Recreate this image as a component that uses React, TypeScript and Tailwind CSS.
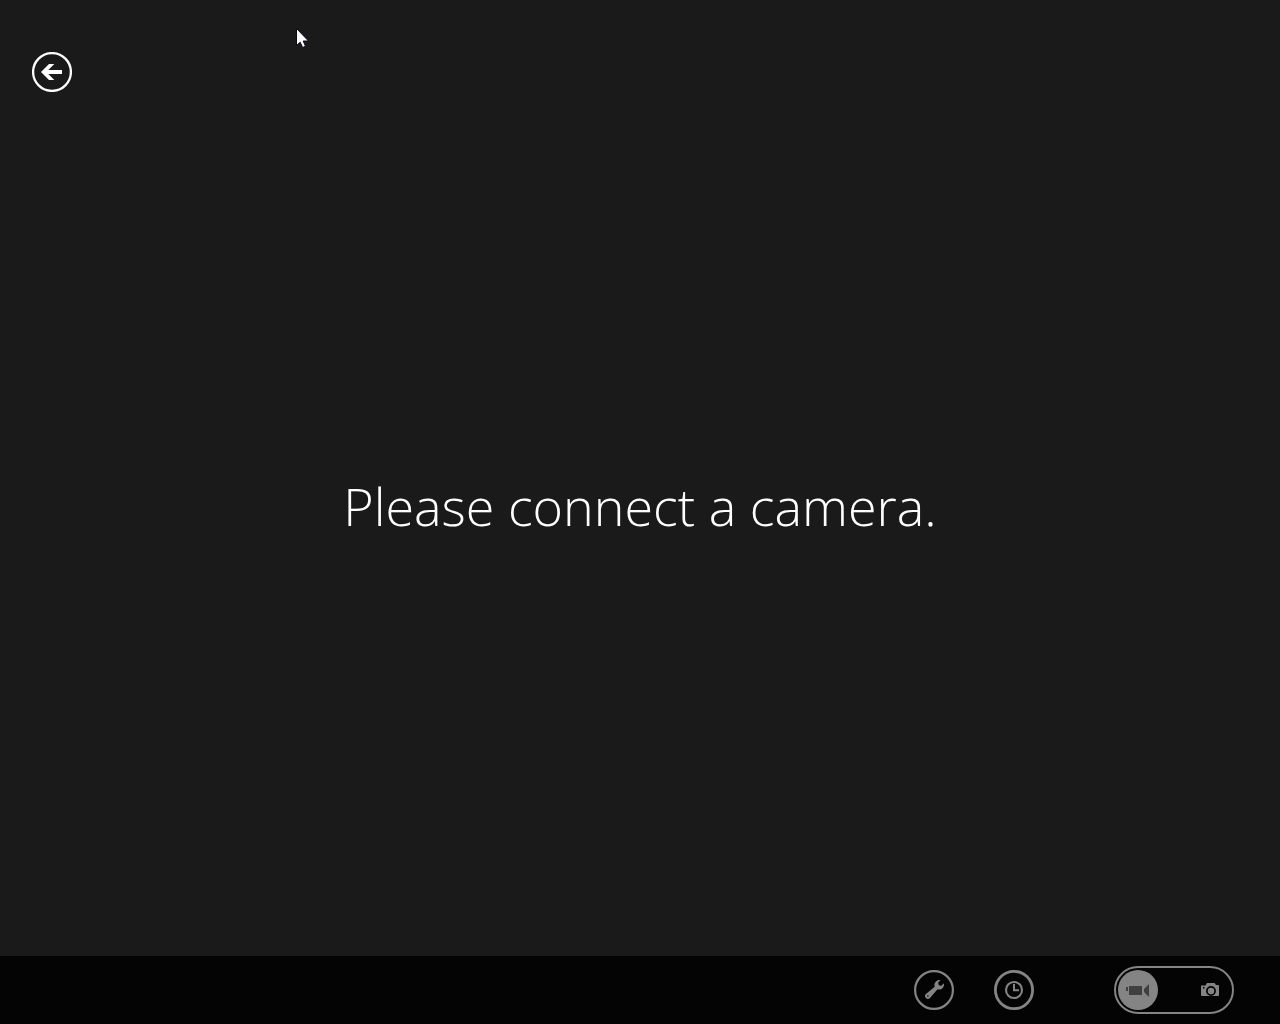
import { useState } from "react";

function BackArrow() {
  return (
    <svg viewBox="0 0 40 40" className="h-10 w-10" fill="none" aria-hidden="true">
      <circle cx="20" cy="20" r="18.9" stroke="white" strokeWidth="2.3" />
      <path d="M9 20 L17 12 H22.3 L16.3 18 H30 V22 H16.3 L22.3 28 H17 Z" fill="white" />
    </svg>
  );
}

function Wrench() {
  return (
    <svg viewBox="0 0 40 40" className="h-10 w-10" fill="none" aria-hidden="true">
      <circle cx="20" cy="20" r="18.9" stroke="currentColor" strokeWidth="2.2" />
      <path
        d="M26.6 10 C23.4 9.6 20.5 11.8 20.4 14.9 C20.4 15.6 20.5 16.2 20.7 16.7 L11.9 23.9 A2.8 2.8 0 1 0 16 28 L23.3 19.4 C27 20.4 30.6 17.6 30 13.2 L27.3 15.8 L24.8 15.2 L24.2 12.6 Z M13.9 25.2 A0.8 0.8 0 1 1 13.9 26.8 A0.8 0.8 0 1 1 13.9 25.2 Z"
        fill="currentColor"
        fillRule="evenodd"
      />
    </svg>
  );
}

function Timer() {
  return (
    <svg viewBox="0 0 40 40" className="h-10 w-10" fill="none" stroke="currentColor" aria-hidden="true">
      <circle cx="20" cy="20" r="18.6" strokeWidth="2.8" />
      <circle cx="20" cy="20" r="8" strokeWidth="2.1" />
      <path d="M20 14 V20.2 H25" strokeWidth="2" />
    </svg>
  );
}

function VideoCamera() {
  return (
    <svg viewBox="0 0 40 40" className="h-10 w-10" fill="currentColor" aria-hidden="true">
      <path d="M8 17 H10 V21 H8 Z M11 16 H24 V25 H11 Z M26 19 L29 16 L31 14 V27 L29 25 L26 22 Z" />
    </svg>
  );
}

function PhotoCamera() {
  return (
    <svg viewBox="0 0 40 40" className="h-10 w-10" aria-hidden="true">
      <path
        d="M11 15.5 H15.4 L17 13 H24.5 L26 15 H28 Q29 15 29 16 V25 Q29 26 28 26 H12 Q11 26 11 25 Z"
        fill="currentColor"
      />
      <circle cx="21" cy="21" r="4.1" fill="currentColor" stroke="#040404" strokeWidth="1.7" />
      <path d="M13 17 H14.5 V18.5 H13 Z" fill="#040404" />
    </svg>
  );
}

const modeClass = "flex h-10 w-10 rounded-full";

export default function App() {
  const [mode, setMode] = useState("video");

  return (
    <div className="relative flex min-h-screen flex-col bg-[#1a1a1a] font-['Open_Sans','Noto_Sans',sans-serif] text-white">
      <header className="flex px-8 pt-[52px]">
        <button type="button" aria-label="Back" className="rounded-full">
          <BackArrow />
        </button>
      </header>

      <main className="flex grow items-center justify-center px-8 pb-9">
        <h1 className="text-center text-[52px] leading-[76px] font-light">Please connect a camera.</h1>
      </main>

      {/* App bar */}
      <footer className="flex h-[68px] items-center justify-end bg-[#040404] pr-[46px] text-[#848484]">
        <button type="button" aria-label="Camera options" className="mr-10 rounded-full">
          <Wrench />
        </button>
        <button type="button" aria-label="Timer" className="mr-20 rounded-full">
          <Timer />
        </button>
        <div
          role="radiogroup"
          aria-label="Capture mode"
          className="flex h-12 w-[120px] items-center justify-between rounded-full border-2 border-[#848484] px-0.5"
        >
          <label className={mode === "video" ? `${modeClass} bg-[#848484] text-[#404040]` : modeClass}>
            <input
              type="radio"
              name="mode"
              aria-label="Video"
              className="sr-only"
              checked={mode === "video"}
              onChange={() => setMode("video")}
            />
            <VideoCamera />
          </label>
          <label className={mode === "photo" ? `${modeClass} bg-[#848484] text-[#404040]` : modeClass}>
            <input
              type="radio"
              name="mode"
              aria-label="Photo"
              className="sr-only"
              checked={mode === "photo"}
              onChange={() => setMode("photo")}
            />
            <PhotoCamera />
          </label>
        </div>
      </footer>

      {/* Mouse pointer */}
      <svg
        viewBox="0 0 14 20"
        className="pointer-events-none absolute top-7 left-[295px] h-5 w-3.5"
        aria-hidden="true"
      >
        <path
          d="M1.5 0.5 V17.5 L5.2 14.2 L7.6 19.5 L10.5 18.2 L8.2 13 H13.5 Z"
          fill="white"
          stroke="#080820"
          strokeWidth="1"
        />
      </svg>
    </div>
  );
}
